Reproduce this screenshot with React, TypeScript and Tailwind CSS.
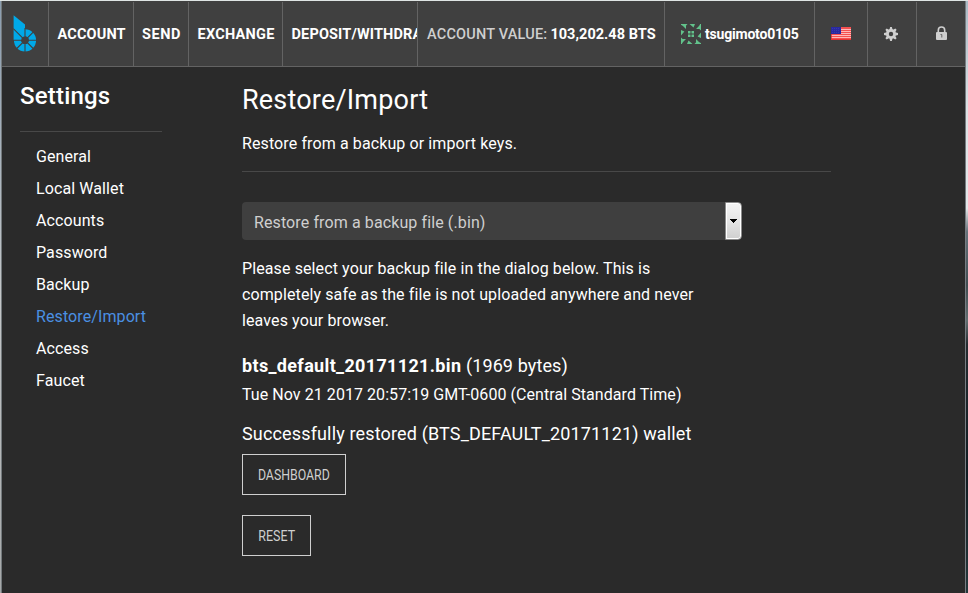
import type { ReactNode } from "react";

function Cell({ className, children }: { className: string; children?: ReactNode }) {
  return (
    <div className={`flex h-16 shrink-0 items-center overflow-hidden whitespace-nowrap border-r border-[#636363] ${className}`}>
      {children}
    </div>
  );
}

function Logo() {
  return (
    <svg width="24" height="38" viewBox="0 0 24 38">
      <path d="M.6.3 12 9.5V25H.6z" fill="#00a9e8" />
      <circle cx="12" cy="25.3" r="7.4" fill="none" stroke="#00a9e8" strokeWidth="7.4" />
      <g stroke="#404040" strokeWidth="1.1">
        <path d="M12 13v25M0 25.3h24M.3 13.6 20.7 34M20.7 16.6 3.3 34" />
      </g>
      <circle cx="12" cy="25.3" r="3.7" fill="#404040" />
    </svg>
  );
}

function Identicon() {
  return (
    <svg width="20" height="20" viewBox="0 0 20 20" fill="#62c28b">
      {[0, 90, 180, 270].map((angle) => (
        <g key={angle} transform={`rotate(${angle} 10 10)`}>
          <path d="M0 0h6.5L4.5 2.2 0 1zM8.5 0H14l-1.5 3.4zM15 5l5-5v5z" />
          <path d="M7 7h2.5v2.5H7z" />
        </g>
      ))}
    </svg>
  );
}

function Flag() {
  return (
    <svg className="mb-px" width="20" height="13" viewBox="0 0 20 13">
      <rect width="20" height="13" fill="#f55050" />
      <path d="M0 2.5h20M0 4.5h20M0 6.5h20M0 8.5h20M0 10.5h20" stroke="#ffb9b9" />
      <rect width="10" height="7" fill="#2929a0" />
      <path d="M1 1.5h8M1 3.5h8M1 5.5h8" stroke="#4444b0" strokeWidth=".6" strokeDasharray="1 1" />
      <path d="M0 12.5h20M.5 7v6" stroke="#df2828" opacity=".7" />
    </svg>
  );
}

function Gear() {
  return (
    <svg className="mr-0.5 mb-px" width="14" height="14" viewBox="0 0 14 14" fill="#cfcfcf">
      {[0, 45, 90, 135].map((angle) => (
        <path key={angle} d="M5.6 2 6.1 0h1.8l.5 2v10l-.5 2H6.1l-.5-2z" transform={`rotate(${angle} 7 7)`} />
      ))}
      <circle cx="7" cy="7" r="5" />
      <circle cx="7" cy="7" r="2.2" fill="#404040" />
    </svg>
  );
}

function Lock() {
  return (
    <svg className="mb-0.5" width="11" height="14" viewBox="0 0 11 14">
      <path d="M2.3 7V4.2a3.2 3.2 0 0 1 6.4 0V7" fill="none" stroke="#cfcfcf" strokeWidth="1.6" />
      <rect y="6" width="11" height="8" rx="1" fill="#cfcfcf" />
      <path d="M4.5 8.5h1.3v3" fill="none" stroke="#666" />
    </svg>
  );
}

const menu = ["General", "Local Wallet", "Accounts", "Password", "Backup", "Restore/Import", "Access", "Faucet"];

export default function App() {
  return (
    <div className="flex h-[593px] w-[968px] overflow-hidden border-t border-[#dfe5e4] bg-[#2a2a2a] font-['Roboto','Liberation_Sans',sans-serif] text-base text-white">
      <div className="w-0.5 shrink-0 border-r border-[#747a7d] bg-gradient-to-b from-[#8b9daf] via-[#c3c6c8] to-[#a5a8a9]" />
      <div className="flex w-[963px] shrink-0 flex-col">
        <header className="flex h-[66px] shrink-0 border-b border-[#636363] bg-[#404040] pt-px text-[14.5px] font-bold tracking-[0.15px]">
          <Cell className="w-[47px] pl-[11px]"><Logo /></Cell>
          <Cell className="w-[85px] pt-0.5 pl-[8.5px]">ACCOUNT</Cell>
          <Cell className="w-[55px] pt-0.5 pl-2 tracking-[0.6px]">SEND</Cell>
          <Cell className="w-[94px] pt-0.5 pl-[8.5px] tracking-[0.26px]">EXCHANGE</Cell>
          <Cell className="w-[135px] pt-0.5 pl-[8.5px]">DEPOSIT/WITHDRAW</Cell>
          <Cell className="w-[247px] pt-0.5 pl-[9px] tracking-[0.03px]"><span className="mr-[3px] font-medium tracking-[0.2px] text-[#cfcfcf]">ACCOUNT VALUE:</span>103,202.48 BTS</Cell>
          <Cell className="w-[150px] gap-1 pl-4 text-sm tracking-[-0.2px]"><Identicon />tsugimoto0105</Cell>
          <Cell className="w-[53px] justify-center"><Flag /></Cell>
          <Cell className="w-[49px] justify-center"><Gear /></Cell>
          <div className="flex h-16 flex-1 items-center justify-center"><Lock /></div>
        </header>
        <div className="flex flex-1">
          <aside className="w-[240px] shrink-0 pl-[18px] pt-[13px]">
            <h1 className="h-[51px] text-2xl leading-8 font-medium tracking-[0.2px]">Settings</h1>
            <nav className="w-[142px] border-t border-[#484848] pt-[9px] pl-4 leading-8 tracking-[0.1px]">
              {menu.map((label) => (
                <div key={label} className={label === "Restore/Import" ? "whitespace-nowrap text-[#4a90e2]" : "whitespace-nowrap"}>{label}</div>
              ))}
            </nav>
          </aside>
          <main className="w-[589px] shrink-0 pt-4 tracking-[0.11px] whitespace-nowrap">
            <h2 className="text-[27px] leading-[34px] tracking-[0.2px]">Restore/Import</h2>
            <p className="mt-[14px] leading-[26px]">Restore from a backup or import keys.</p>
            <div className="mt-[14px] border-t border-[#484848]" />
            <div className="mt-[30px] flex h-[38px] w-[500px] overflow-hidden rounded bg-[#3f3f3f]">
              <span className="flex-1 pt-px pl-3 leading-[40px] text-[#cfcfcf]">Restore from a backup file (.bin)</span>
              <span className="flex w-[17px] items-center justify-center rounded-r border border-[#8b8b8b] bg-gradient-to-b from-[#f4f4f4] via-[#e5e5e5] to-[#cfcfcf] shadow-[inset_0_0_0_1px_white]">
                <svg width="7" height="4" viewBox="0 0 7 4" shapeRendering="crispEdges"><path d="M0 0h7v1H6v1H5v1H4v1H3V3H2V2H1V1H0z" fill="black" /></svg>
              </span>
            </div>
            <p className="mt-4 leading-[26px]">Please select your backup file in the dialog below. This is<br />completely safe as the file is not uploaded anywhere and never<br />leaves your browser.</p>
            <h3 className="mt-[18px] text-lg leading-7"><b className="font-bold tracking-[0.34px]">bts_default_20171121.bin</b> (1969 bytes)</h3>
            <p className="mt-0.5 leading-[26px] tracking-[0.06px]">Tue Nov 21 2017 20:57:19 GMT-0600 (Central Standard Time)</p>
            <h3 className="mt-3 text-lg leading-7 tracking-[0.15px]">Successfully restored (BTS_DEFAULT_20171121) wallet</h3>
            <button className="mt-[6px] flex h-[41px] w-[104px] items-center justify-center border border-[#cfcfcf] text-sm tracking-normal text-[#cfcfcf]"><span className="scale-x-[0.88]">DASHBOARD</span></button>
            <button className="mt-5 flex h-[41px] w-[69px] items-center justify-center border border-[#cfcfcf] text-sm tracking-normal text-[#cfcfcf]"><span className="scale-x-[0.89]">RESET</span></button>
          </main>
        </div>
      </div>
      <div className="w-[3px] shrink-0 border-l border-[#777d82] bg-[linear-gradient(to_bottom,#aabac5_0%,#dce1e4_18%,#e4e7e9_35%,#65727a_39%,#3f4c50_48%,#626e70_54%,#252c30_58%,#101b21_80%,#26383b_100%)]" />
    </div>
  );
}
